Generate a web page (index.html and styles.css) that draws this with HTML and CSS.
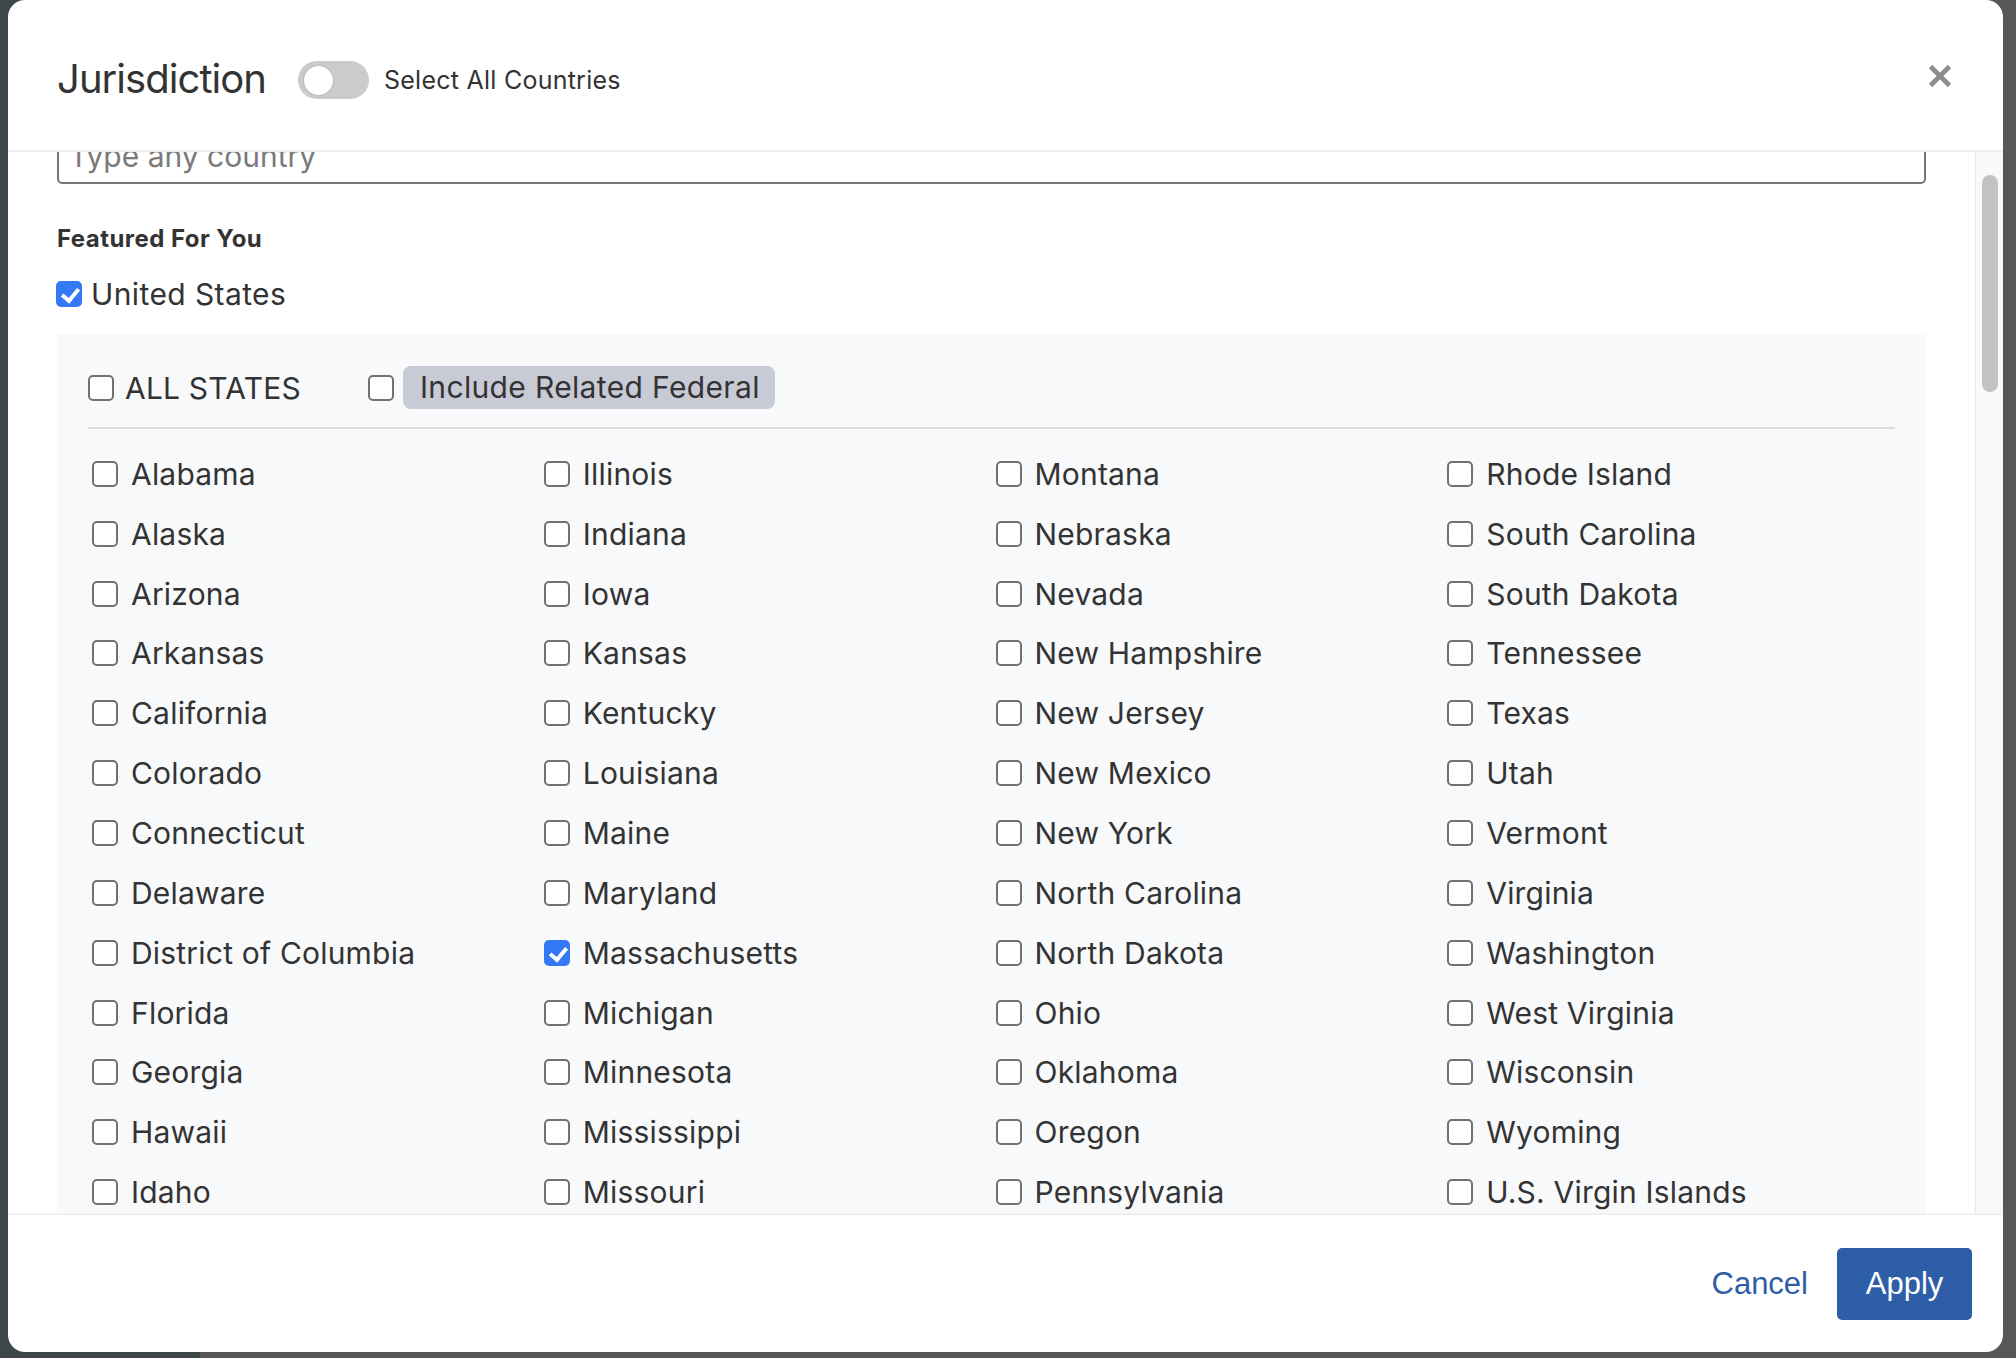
FILE: index.html
```html
<!DOCTYPE html>
<html lang="en">
<head>
  <meta charset="UTF-8" />
  <meta name="viewport" content="width=device-width, initial-scale=1.0"/>
  <title>Jurisdiction</title>
  <link rel="stylesheet" href="styles.css">
</head>
<body>
  <div class="modal">
    <div class="modal-header">
      <div class="modal-title">Jurisdiction</div>
      <label class="switch">
        <input type="checkbox">
        <span class="slider"></span>
      </label>
      <span class="switch-text">Select All Countries</span>
      <button class="close" title="Close">
        <svg width="24" height="24" viewBox="0 0 24 24">
          <path d="M2.5 2.5L21.5 21.5M21.5 2.5L2.5 21.5" stroke="#8c8c8c" stroke-width="4.6" fill="none"/>
        </svg>
      </button>
    </div>

    <div class="modal-body">
      <div class="scroll-area">
        <div class="scroll-content">
          <input class="search" type="text" placeholder="Type any country">

          <div class="section-title">Featured For You</div>
          <label class="check country"><input type="checkbox" checked><span class="box"></span>United States</label>

          <div class="states">
            <div class="states-head">
              <label class="check all"><input type="checkbox"><span class="box"></span>ALL STATES</label>
              <label class="check federal"><input type="checkbox"><span class="box"></span><span class="pill">Include Related Federal</span></label>
            </div>
            <div class="states-grid">
              <label class="check"><input type="checkbox"><span class="box"></span>Alabama</label>
              <label class="check"><input type="checkbox"><span class="box"></span>Alaska</label>
              <label class="check"><input type="checkbox"><span class="box"></span>Arizona</label>
              <label class="check"><input type="checkbox"><span class="box"></span>Arkansas</label>
              <label class="check"><input type="checkbox"><span class="box"></span>California</label>
              <label class="check"><input type="checkbox"><span class="box"></span>Colorado</label>
              <label class="check"><input type="checkbox"><span class="box"></span>Connecticut</label>
              <label class="check"><input type="checkbox"><span class="box"></span>Delaware</label>
              <label class="check"><input type="checkbox"><span class="box"></span>District of Columbia</label>
              <label class="check"><input type="checkbox"><span class="box"></span>Florida</label>
              <label class="check"><input type="checkbox"><span class="box"></span>Georgia</label>
              <label class="check"><input type="checkbox"><span class="box"></span>Hawaii</label>
              <label class="check"><input type="checkbox"><span class="box"></span>Idaho</label>

              <label class="check"><input type="checkbox"><span class="box"></span>Illinois</label>
              <label class="check"><input type="checkbox"><span class="box"></span>Indiana</label>
              <label class="check"><input type="checkbox"><span class="box"></span>Iowa</label>
              <label class="check"><input type="checkbox"><span class="box"></span>Kansas</label>
              <label class="check"><input type="checkbox"><span class="box"></span>Kentucky</label>
              <label class="check"><input type="checkbox"><span class="box"></span>Louisiana</label>
              <label class="check"><input type="checkbox"><span class="box"></span>Maine</label>
              <label class="check"><input type="checkbox"><span class="box"></span>Maryland</label>
              <label class="check"><input type="checkbox" checked><span class="box"></span>Massachusetts</label>
              <label class="check"><input type="checkbox"><span class="box"></span>Michigan</label>
              <label class="check"><input type="checkbox"><span class="box"></span>Minnesota</label>
              <label class="check"><input type="checkbox"><span class="box"></span>Mississippi</label>
              <label class="check"><input type="checkbox"><span class="box"></span>Missouri</label>

              <label class="check"><input type="checkbox"><span class="box"></span>Montana</label>
              <label class="check"><input type="checkbox"><span class="box"></span>Nebraska</label>
              <label class="check"><input type="checkbox"><span class="box"></span>Nevada</label>
              <label class="check"><input type="checkbox"><span class="box"></span>New Hampshire</label>
              <label class="check"><input type="checkbox"><span class="box"></span>New Jersey</label>
              <label class="check"><input type="checkbox"><span class="box"></span>New Mexico</label>
              <label class="check"><input type="checkbox"><span class="box"></span>New York</label>
              <label class="check"><input type="checkbox"><span class="box"></span>North Carolina</label>
              <label class="check"><input type="checkbox"><span class="box"></span>North Dakota</label>
              <label class="check"><input type="checkbox"><span class="box"></span>Ohio</label>
              <label class="check"><input type="checkbox"><span class="box"></span>Oklahoma</label>
              <label class="check"><input type="checkbox"><span class="box"></span>Oregon</label>
              <label class="check"><input type="checkbox"><span class="box"></span>Pennsylvania</label>

              <label class="check"><input type="checkbox"><span class="box"></span>Rhode Island</label>
              <label class="check"><input type="checkbox"><span class="box"></span>South Carolina</label>
              <label class="check"><input type="checkbox"><span class="box"></span>South Dakota</label>
              <label class="check"><input type="checkbox"><span class="box"></span>Tennessee</label>
              <label class="check"><input type="checkbox"><span class="box"></span>Texas</label>
              <label class="check"><input type="checkbox"><span class="box"></span>Utah</label>
              <label class="check"><input type="checkbox"><span class="box"></span>Vermont</label>
              <label class="check"><input type="checkbox"><span class="box"></span>Virginia</label>
              <label class="check"><input type="checkbox"><span class="box"></span>Washington</label>
              <label class="check"><input type="checkbox"><span class="box"></span>West Virginia</label>
              <label class="check"><input type="checkbox"><span class="box"></span>Wisconsin</label>
              <label class="check"><input type="checkbox"><span class="box"></span>Wyoming</label>
              <label class="check"><input type="checkbox"><span class="box"></span>U.S. Virgin Islands</label>
            </div>
          </div>
        </div>
      </div>
      <div class="scrollbar"><div class="thumb"></div></div>
    </div>

    <div class="modal-footer">
      <button class="btn-link">Cancel</button>
      <button class="btn-primary">Apply</button>
    </div>
  </div>
</body>
</html>
```

FILE: styles.css
```css
html, body {
  margin: 0;
  padding: 0;
  height: 100%;
  overflow: hidden;
}

body {
  background: linear-gradient(to right, #3d4648 200px, #575757 200px);
  font-family: Inter, "Noto Sans", sans-serif;
  color: #333;
}

.modal {
  margin-left: 8px;
  width: 1995px;
  height: 1352px;
  background: #fff;
  border-radius: 17px;
  display: flex;
  flex-direction: column;
  overflow: hidden;
}

/* header */
.modal-header {
  flex: none;
  height: 152px;
  box-sizing: border-box;
  padding: 6px 51px 0 49px;
  display: flex;
  align-items: center;
  border-bottom: 2px solid #f0f0f0;
}

.modal-title {
  font-size: 40px;
  font-weight: 400;
  letter-spacing: -0.95px;
  color: #333;
}

.switch {
  position: relative;
  margin-left: 32px;
  width: 71px;
  height: 38px;
  margin-top: 4px;
}

.switch input {
  display: none;
}

.slider {
  display: block;
  width: 100%;
  height: 100%;
  background: #cbcbcb;
  border-radius: 19px;
}

.slider::before {
  content: "";
  position: absolute;
  top: 5px;
  left: 6px;
  width: 29px;
  height: 29px;
  border-radius: 50%;
  background: #fff;
  box-shadow: 0 0 2px rgba(0, 0, 0, 0.25);
}

.switch-text {
  margin-left: 15px;
  margin-top: 4px;
  font-size: 25px;
  letter-spacing: 0.25px;
}

.close {
  margin-left: auto;
  margin-top: -4px;
  padding: 0;
  border: none;
  background: none;
  width: 24px;
  height: 24px;
  cursor: pointer;
}

.close svg {
  display: block;
}

/* body */
.modal-body {
  flex: 1;
  min-height: 0;
  display: flex;
}

.scroll-area {
  flex: 1;
  overflow: hidden;
}

.scroll-content {
  /* list is scrolled down a bit */
  margin-top: -24px;
  padding: 0 49px;
}

.search {
  display: block;
  width: 100%;
  height: 56px;
  box-sizing: border-box;
  border: 2px solid #767676;
  border-radius: 5px;
  padding: 0 10px;
  font-family: inherit;
  font-size: 30px;
  color: #333;
}

.search::placeholder {
  color: #7a7a7a;
}

.section-title {
  margin-top: 41px;
  font-size: 24px;
  line-height: 28px;
  font-weight: 700;
  letter-spacing: 0.45px;
}

.check {
  display: flex;
  align-items: center;
  font-size: 30px;
  line-height: 36px;
  letter-spacing: 0.2px;
  cursor: pointer;
}

.check input {
  display: none;
}

.box {
  position: relative;
  flex: none;
  width: 26px;
  height: 26px;
  box-sizing: border-box;
  border: 2px solid #717171;
  border-radius: 5px;
  background: #fff;
  margin-right: 13px;
}

.check input:checked + .box {
  background: #3478f6;
  border-color: #3478f6;
}

.check input:checked + .box::after {
  content: "";
  position: absolute;
  left: 7px;
  top: 2px;
  width: 7px;
  height: 13px;
  border-right: 4px solid #fff;
  border-bottom: 4px solid #fff;
  transform: rotate(40deg);
}

.country {
  margin-top: 23px;
  letter-spacing: 0.4px;
}

.country .box {
  margin-left: -1px;
  margin-right: 9px;
}

/* states panel */
.states {
  margin-top: 22px;
  background: #f8f9fb;
  padding: 32px 31px 0;
}

.states-head {
  display: flex;
  align-items: center;
  height: 43px;
  padding-bottom: 18px;
  border-bottom: 2px solid #dcdcdc;
}

.states-head .box {
  margin-right: 11px;
}

.all {
  margin-right: 67px;
}

.federal .box {
  margin-right: 9px;
}

.pill {
  height: 43px;
  line-height: 43px;
  padding: 0 15px 0 17px;
  background: #c8cad6;
  border-radius: 8px;
  letter-spacing: 0.35px;
}

.states-grid {
  margin-top: 15px;
  display: grid;
  grid-template-columns: repeat(4, 1fr);
  grid-template-rows: repeat(13, 59.85px);
  grid-auto-flow: column;
}

.states-grid .check {
  padding-left: 4px;
}

/* fake scrollbar */
.scrollbar {
  flex: none;
  width: 28px;
  box-sizing: border-box;
  border-left: 1px solid #e8e8e8;
  background: #f9f9f9;
  padding: 23px 0 0 6px;
}

.thumb {
  width: 16px;
  height: 217px;
  border-radius: 8px;
  background: #c2c2c2;
}

/* footer */
.modal-footer {
  flex: none;
  height: 139px;
  box-sizing: border-box;
  border-top: 2px solid #f0f0f0;
  padding-right: 31px;
  display: flex;
  align-items: center;
  justify-content: flex-end;
}

.btn-link,
.btn-primary {
  font-family: "Liberation Sans", Arial, sans-serif;
  font-size: 31px;
  border: none;
  cursor: pointer;
}

.btn-link {
  background: none;
  color: #2f5ea8;
  padding: 0;
  margin-right: 29px;
}

.btn-primary {
  width: 135px;
  height: 72px;
  border-radius: 5px;
  background: #2f5ea8;
  color: #fff;
}
```
